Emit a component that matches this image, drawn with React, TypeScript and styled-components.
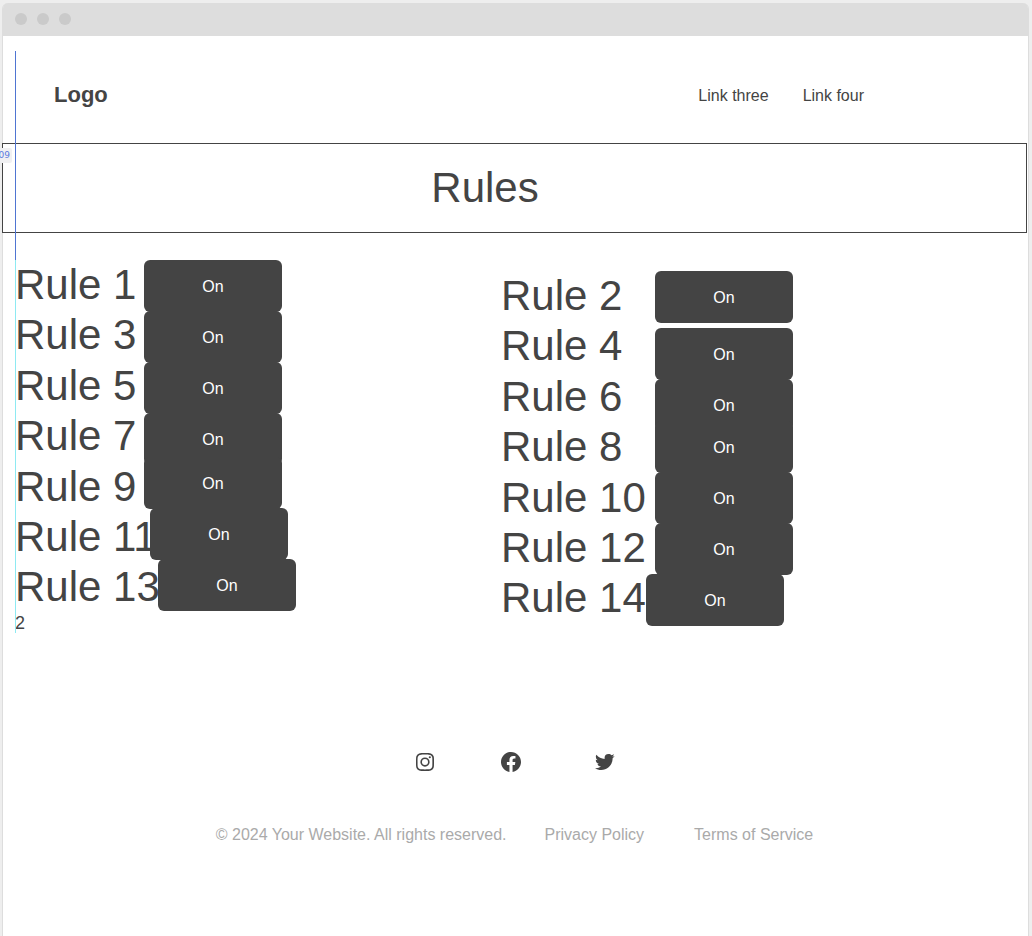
import React from "react";
import styled, { createGlobalStyle } from "styled-components";
import { BiLogoInstagram, BiLogoFacebookCircle, BiLogoTwitter } from "react-icons/bi";

const Global = createGlobalStyle`
  * { box-sizing: border-box; }
  body {
    margin: 0;
    background: #eeeeee;
    color: #444444;
    font: 16px/24px "Liberation Sans", Arial, sans-serif;
  }
  a { color: inherit; text-decoration: none; }
`;

const BrowserFrame = styled.div`
  position: relative;
  min-height: calc(100vh - 3px);
  margin: 3px 3px 0 2px;
  border: 1px solid #dddddd;
  border-width: 0 1px;
  border-radius: 6px 6px 0 0;
  background: #ffffff;
`;

const TitleBar = styled.div`
  display: flex;
  align-items: flex-start;
  gap: 10px;
  height: 33px;
  padding: 10px 12px;
  border-radius: 5px 5px 0 0;
  background: #dddddd;
`;

const Dot = styled.span`
  width: 12px;
  height: 12px;
  border-radius: 50%;
  background: #cacaca;
`;

const Header = styled.header`
  display: flex;
  align-items: center;
  justify-content: space-between;
  padding: 44px 164px 33px 51px;
`;

const Logo = styled.a`
  font-size: 22px;
  line-height: 30px;
  font-weight: 700;
`;

const Nav = styled.nav`
  display: flex;
  gap: 34px;
  padding-top: 2px;
`;

const Banner = styled.section`
  display: flex;
  align-items: center;
  justify-content: center;
  height: 90px;
  margin: 0 1px 0 -1px;
  padding-right: 59px;
  border: 1px solid #444444;
`;

const Title = styled.h1`
  margin: 0;
  font-size: 42px;
  line-height: 50px;
  font-weight: 400;
`;

const Rules = styled.main`
  display: grid;
  grid-template-columns: 486px 1fr;
  padding: 27px 0 0 12px;
`;

const Column = styled.section<{ $lowered?: boolean }>`
  display: grid;
  grid-template-columns: ${(p) => (p.$lowered ? "154px" : "129px")} auto;
  justify-content: start;
  align-items: start;
  padding-top: ${(p) => (p.$lowered ? "11px" : "0")};
`;

const Labels = styled.div`
  display: flex;
  flex-direction: column;
  white-space: nowrap;
`;

const RuleLabel = styled.label`
  font-size: 42px;
  line-height: 1.2;
`;

const Note = styled.span`
  font-size: 18px;
  line-height: 20px;
`;

const Switches = styled.div`
  position: relative;
  display: flex;
  flex-direction: column;
`;

const Toggle = styled.button<{ $top: number; $left: number }>`
  width: 138px;
  height: 52px;
  margin: ${(p) => p.$top}px 0 0 ${(p) => p.$left}px;
  padding: 2px 0 0;
  border: 0;
  border-radius: 6px;
  background: #444444;
  color: #ffffff;
  font: inherit;
`;

const Footer = styled.footer`
  display: flex;
  flex-direction: column;
  align-items: center;
  gap: 49px;
  padding: 117px 2px 48px 0;
`;

const Social = styled.div`
  display: flex;
  align-items: center;
  gap: 62px;
  a { display: flex; }
  a:last-child { margin-left: 8px; }
`;

const Legal = styled.div`
  display: flex;
  color: #aaaaaa;
  gap: 50px;
  p { margin: 0 -12px 0 0; }
`;

const Guide = styled.div`
  position: absolute;
  top: 48px;
  left: 12px;
  width: 1px;
  height: 582px;
  background: linear-gradient(#4f75d2 209px, #8eeaf2 209px);
`;

const SizeBadge = styled.div`
  position: absolute;
  top: 145px;
  left: -3px;
  width: 12px;
  height: 15px;
  display: flex;
  justify-content: flex-end;
  overflow: hidden;
  padding-right: 2px;
  border-radius: 2px;
  background: #f0f0f2;
  color: #5b7be0;
  font-family: "DejaVu Sans", sans-serif;
  font-size: 9px;
  line-height: 15px;
`;

type Rule = { n: number; top?: number; left?: number };

const odd: Rule[] = [
  { n: 1, top: 0 }, { n: 3 }, { n: 5 }, { n: 7 },
  { n: 9, top: -8 }, { n: 11, left: 6 }, { n: 13, left: 14 },
];
const even: Rule[] = [
  { n: 2, top: 0 }, { n: 4, top: 5 }, { n: 6 }, { n: 8, top: -10 },
  { n: 10 }, { n: 12 }, { n: 14, left: -9 },
];

function RuleColumn({ rules, lowered, note }: { rules: Rule[]; lowered?: boolean; note?: string }) {
  return (
    <Column $lowered={lowered}>
      <Labels>
        {rules.map((r) => (
          <RuleLabel key={r.n} htmlFor={`rule-${r.n}`}>Rule {r.n}</RuleLabel>
        ))}
        {note && <Note>{note}</Note>}
      </Labels>
      <Switches>
        {rules.map((r) => (
          <Toggle key={r.n} id={`rule-${r.n}`} type="button" $top={r.top ?? -1} $left={r.left ?? 0}>
            On
          </Toggle>
        ))}
      </Switches>
    </Column>
  );
}

export default function App() {
  return (
    <>
      <Global />
      <BrowserFrame>
        <TitleBar><Dot /><Dot /><Dot /></TitleBar>
        <Header>
          <Logo href="#">Logo</Logo>
          <Nav>
            <a href="#three">Link three</a>
            <a href="#four">Link four</a>
          </Nav>
        </Header>
        <Banner><Title>Rules</Title></Banner>
        <Rules>
          <RuleColumn rules={odd} note="2" />
          <RuleColumn rules={even} lowered />
        </Rules>
        <Footer>
          <Social>
            <a href="#instagram" aria-label="Instagram"><BiLogoInstagram size={24} /></a>
            <a href="#facebook" aria-label="Facebook"><BiLogoFacebookCircle size={24} /></a>
            <a href="#twitter" aria-label="Twitter"><BiLogoTwitter size={24} /></a>
          </Social>
          <Legal>
            <p>© 2024 Your Website. All rights reserved.</p>
            <a href="#privacy">Privacy Policy</a>
            <a href="#terms">Terms of Service</a>
          </Legal>
        </Footer>
        <Guide />
        <SizeBadge>09</SizeBadge>
      </BrowserFrame>
    </>
  );
}
